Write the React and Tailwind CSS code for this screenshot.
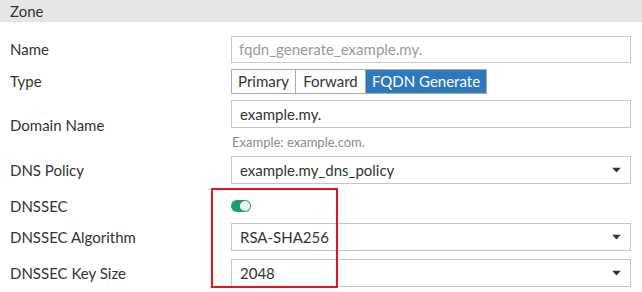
import React from 'react';

const Caret = () => (
  <svg width="9" height="5" viewBox="0 0 9 5" className="absolute right-[9px] top-1/2 -translate-y-1/2">
    <path d="M0 0 H9 L4.5 5 Z" fill="#333" />
  </svg>
);

const Label = ({ children }) => (
  <div className="w-[231px] shrink-0 pl-[10px] text-[15px] text-[#333]">{children}</div>
);

const Select = ({ value }) => (
  <div className="relative flex h-[28px] w-[400px] items-center border border-[#c4c4c4] bg-white pl-[8px] text-[15px] text-[#333]">
    {value}
    <Caret />
  </div>
);

const App = () => {
  return (
    <div className="relative h-[292px] w-[642px] overflow-hidden bg-white font-['Lato',sans-serif] text-[#333]">
      <div className="flex h-[22px] items-center bg-[#e6e6e6] pl-[10px] text-[15px]">Zone</div>

      <div className="mt-[14px] flex items-center">
        <Label>Name</Label>
        <div className="flex h-[27px] w-[400px] items-center border border-[#c8c8c8] pl-[7px] text-[15px] text-[#999]">
          fqdn_generate_example.my.
        </div>
      </div>

      <div className="mt-[6px] flex items-center">
        <Label>Type</Label>
        <div className="flex h-[25px] text-[15px]">
          <div className="flex w-[65px] items-center justify-center border border-[#aaa]">Primary</div>
          <div className="flex w-[70px] items-center justify-center border border-l-0 border-[#aaa]">Forward</div>
          <div className="flex w-[121px] items-center justify-center border border-l-0 border-[#aaa] bg-[#2e78bd] text-white">FQDN Generate</div>
        </div>
      </div>

      <div className="mt-[6px] flex items-center">
        <Label>Domain Name</Label>
        <div>
          <div className="flex h-[28px] w-[400px] items-center border border-[#c4c4c4] pl-[8px] text-[15px]">example.my.</div>
          <div className="mt-[5px] pl-[1px] text-[13px] leading-[18px] text-[#8a8a8a]">Example: example.com.</div>
        </div>
      </div>

      <div className="mt-[5px] flex items-center">
        <Label>DNS Policy</Label>
        <Select value="example.my_dns_policy" />
      </div>

      <div className="mt-[16px] flex h-[12px] items-center">
        <Label>DNSSEC</Label>
        <div className="relative h-[12px] w-[20px] rounded-full bg-[#1b9e78]">
          <div className="absolute right-[1px] top-[1px] h-[10px] w-[10px] rounded-full bg-[#f2f2f2]" />
        </div>
      </div>

      <div className="mt-[11px] flex items-center">
        <Label>DNSSEC Algorithm</Label>
        <Select value="RSA-SHA256" />
      </div>

      <div className="mt-[8px] flex items-center">
        <Label>DNSSEC Key Size</Label>
        <Select value="2048" />
      </div>

      <div className="pointer-events-none absolute left-[211px] top-[188px] h-[100px] w-[127px] border-2 border-[#e3161f]" />
    </div>
  );
};

export default App;
